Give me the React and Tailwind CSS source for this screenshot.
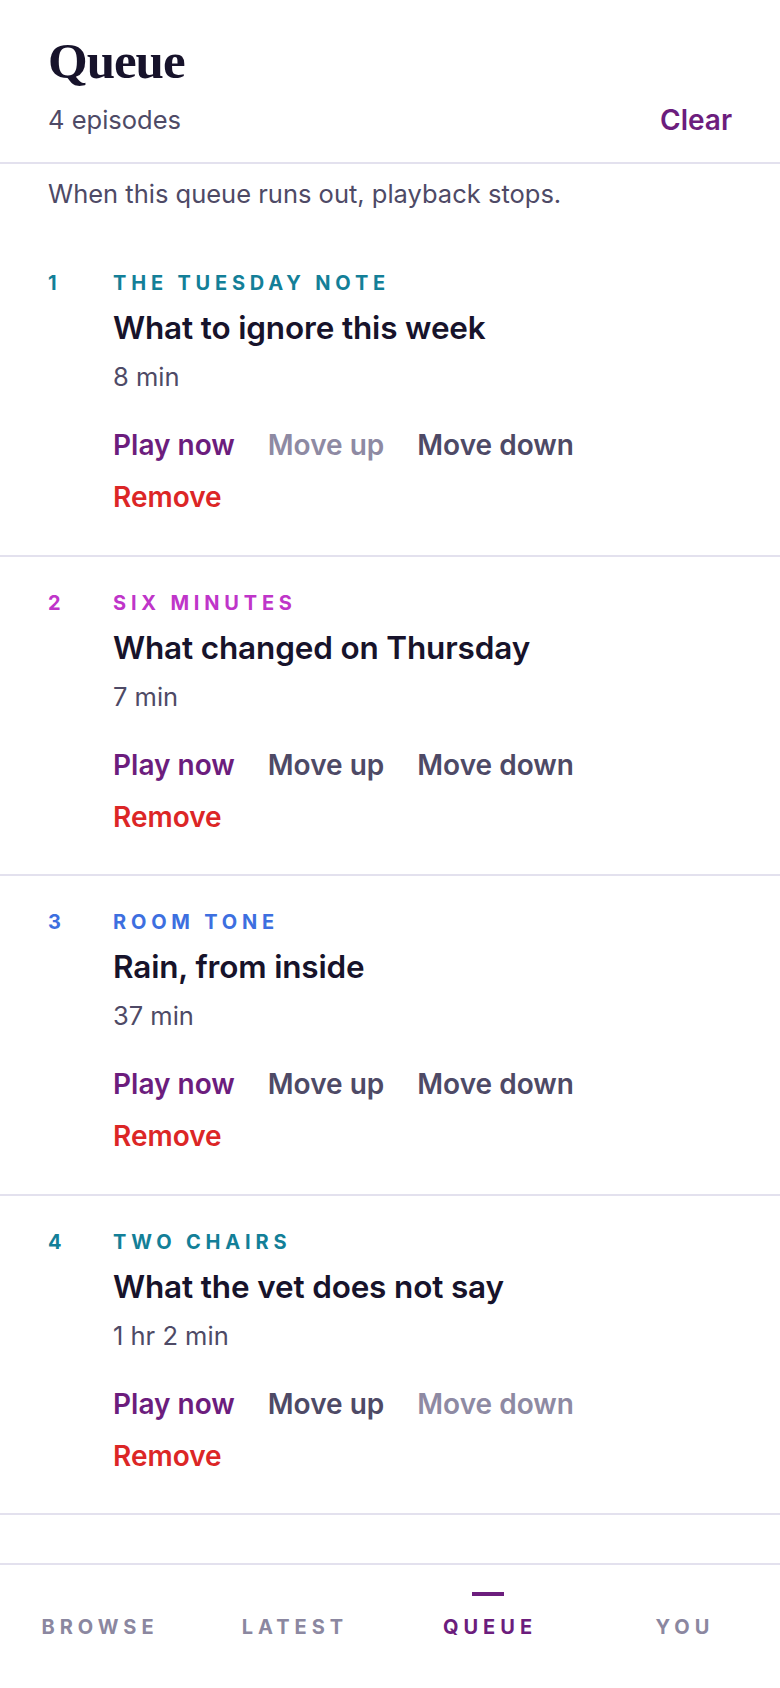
import React from "react";

const items = [
  { n: 1, show: "THE TUESDAY NOTE", color: "text-[#137f98]", title: "What to ignore this week", dur: "8 min", upDisabled: true, downDisabled: false },
  { n: 2, show: "SIX MINUTES", color: "text-[#bf35c9]", title: "What changed on Thursday", dur: "7 min", upDisabled: false, downDisabled: false },
  { n: 3, show: "ROOM TONE", color: "text-[#3d6fe0]", title: "Rain, from inside", dur: "37 min", upDisabled: false, downDisabled: false },
  { n: 4, show: "TWO CHAIRS", color: "text-[#137f98]", title: "What the vet does not say", dur: "1 hr 2 min", upDisabled: false, downDisabled: true },
];

function Item({ it }) {
  return (
    <div className="flex px-12 pt-[34px] pb-[42.5px] border-b-2 border-[#e3e1ee]">
      <div className={`w-[65px] shrink-0 text-[20px] leading-[24px] font-bold ${it.color}`}>{it.n}</div>
      <div className="flex flex-col">
        <div className={`text-[20px] leading-[24px] font-bold tracking-[0.24em] ${it.color}`}>{it.show}</div>
        <div className="mt-[15px] text-[31.5px] leading-[36px] font-semibold tracking-[-0.005em] text-[#17132b]">{it.title}</div>
        <div className="mt-[16px] text-[25.5px] leading-[30px] text-[#4e4a66]">{it.dur}</div>
        <div className="mt-[38px] flex gap-[33px] text-[28px] leading-[30px] font-semibold">
          <button className="text-[#6c1d7d]">Play now</button>
          <button className={it.upDisabled ? "text-[#8e8aa3]" : "text-[#4e4a66]"}>Move up</button>
          <button className={it.downDisabled ? "text-[#8e8aa3]" : "text-[#4e4a66]"}>Move down</button>
        </div>
        <div className="mt-[22px] text-[28px] leading-[30px] font-semibold text-[#dc2626]">
          <button>Remove</button>
        </div>
      </div>
    </div>
  );
}

export default function App() {
  const tabs = ["BROWSE", "LATEST", "QUEUE", "YOU"];
  return (
    <div className="w-[780px] min-h-[1688px] bg-white flex flex-col" style={{ fontFamily: "Inter, 'Noto Sans', sans-serif" }}>
      <header className="px-12 pt-[33px] pb-[27px] border-b-2 border-[#e3e1ee]">
        <h1 className="text-[51px] leading-[56px] font-bold tracking-[-0.02em] text-[#17132b]" style={{ fontFamily: "'Liberation Serif', serif" }}>Queue</h1>
        <div className="mt-[16px] flex items-center justify-between">
          <span className="text-[25.5px] leading-[30px] text-[#4e4a66]">4 episodes</span>
          <button className="text-[28px] leading-[30px] font-semibold text-[#6c1d7d]">Clear</button>
        </div>
      </header>
      <p className="px-12 pt-[15px] pb-[28px] text-[25.5px] leading-[30px] text-[#4e4a66]">When this queue runs out, playback stops.</p>
      <div className="flex flex-col">
        {items.map((it) => <Item key={it.n} it={it} />)}
      </div>
      <div className="h-[46px]" />
      <nav className="mt-auto h-[125px] border-t-2 border-[#e3e1ee] grid grid-cols-4">
        {tabs.map((t) => (
          <div key={t} className="flex flex-col items-center pt-[27px]">
            <div className={`h-[4px] w-[32px] ${t === "QUEUE" ? "bg-[#6c1d7d]" : "bg-transparent"}`} />
            <div className={`mt-[19px] text-[20px] leading-[24px] font-bold tracking-[0.25em] pl-[0.25em] ${t === "QUEUE" ? "text-[#6c1d7d]" : "text-[#8b87a0]"}`}>{t}</div>
          </div>
        ))}
      </nav>
    </div>
  );
}
